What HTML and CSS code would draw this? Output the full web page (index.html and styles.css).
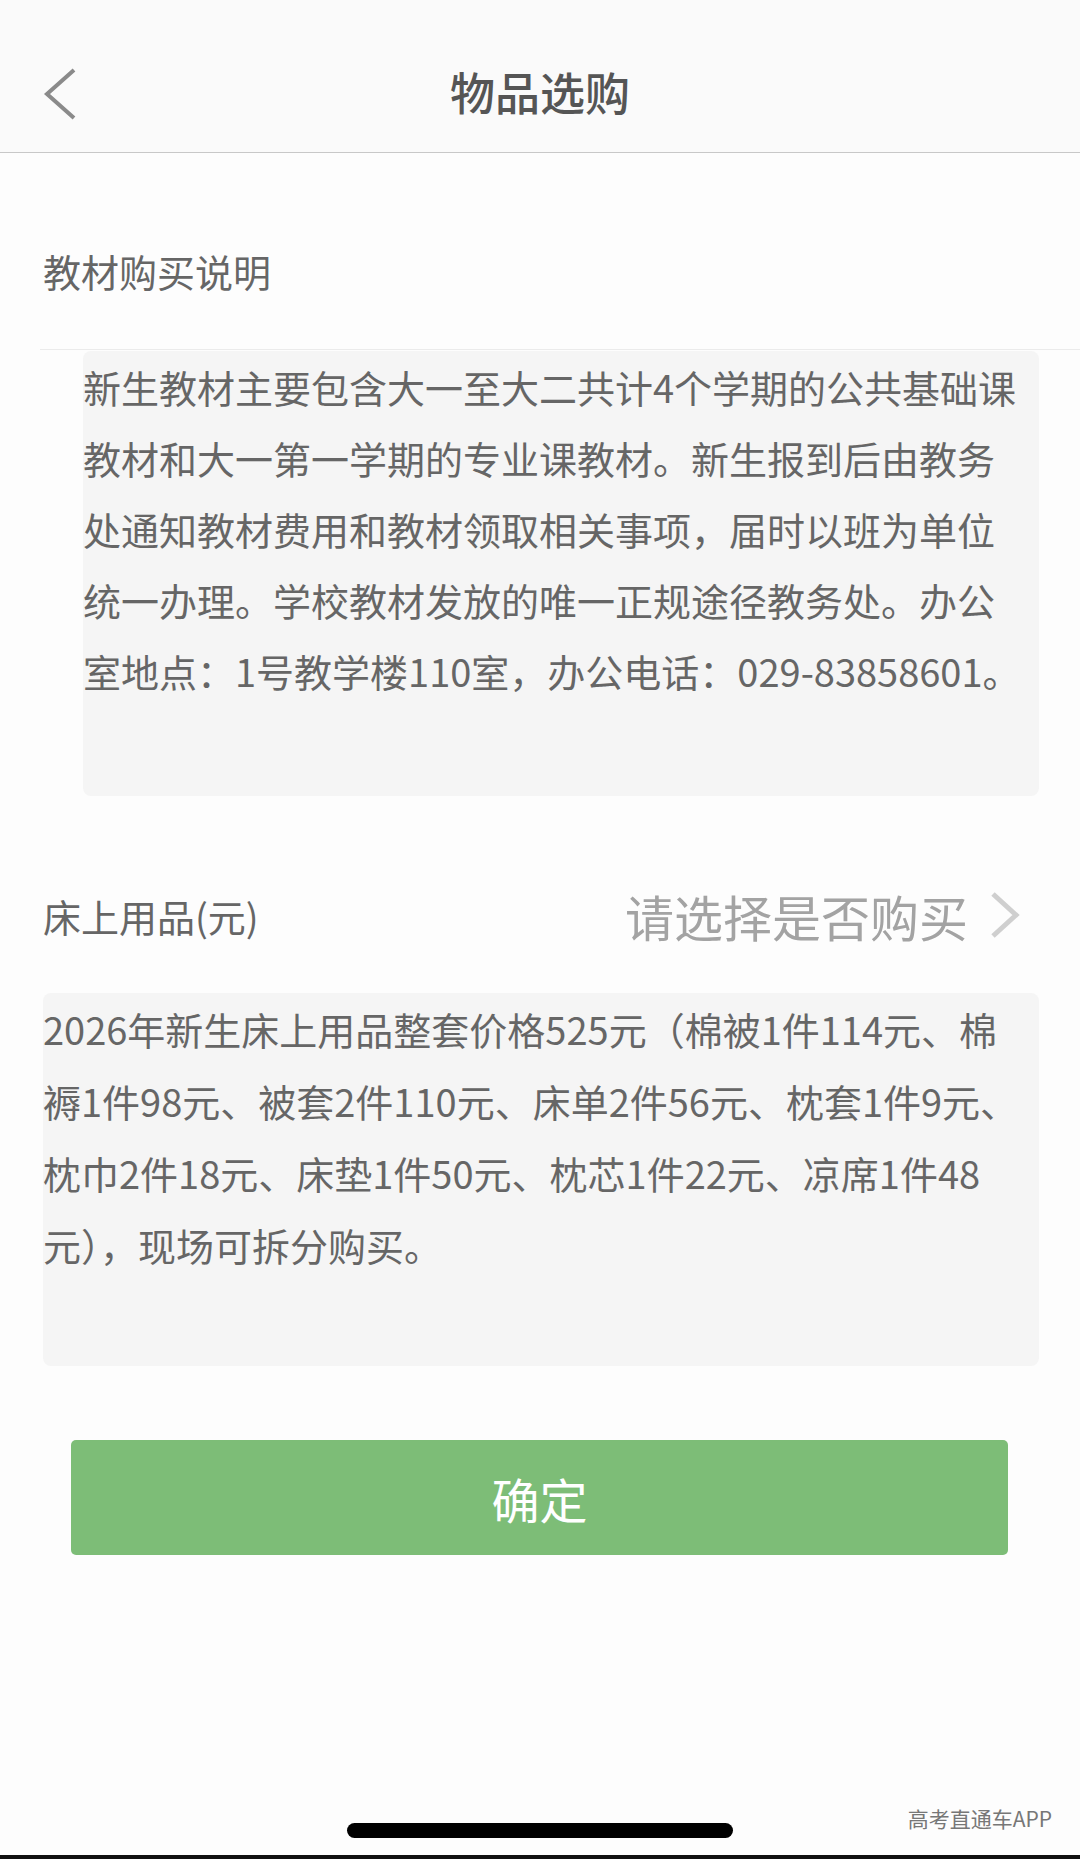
FILE: index.html
```html
<!DOCTYPE html>
<html lang="zh-CN">
<head>
  <meta charset="UTF-8" />
  <meta name="viewport" content="width=device-width, initial-scale=1.0"/>
  <title>物品选购</title>
  <link rel="stylesheet" href="styles.css">
</head>
<body>

<div class="page">
  <div class="header">
    <svg class="back" viewBox="0 0 34 52" width="34" height="52">
      <polyline points="31,2 4,26 31,50" fill="none" stroke="#8a8a8a" stroke-width="4" stroke-linejoin="miter"/>
    </svg>
    <div class="title">物品选购</div>
  </div>

  <div class="label">教材购买说明</div>
  <div class="divider"></div>
  <div class="note note-books">新生教材主要包含大一至大二共计4个学期的公共基础课<br>教材和大一第一学期的专业课教材。新生报到后由教务<br>处通知教材费用和教材领取相关事项，届时以班为单位<br>统一办理。学校教材发放的唯一正规途径教务处。办公<br>室地点：1号教学楼110室，办公电话：029-83858601。</div>

  <div class="row">
    <div class="label-inline">床上用品(元)</div>
    <div class="picker">
      <span>请选择是否购买</span>
      <svg viewBox="0 0 34 48" width="34" height="48">
        <polyline points="5,3 28,24 5,45" fill="none" stroke="#cfcfcf" stroke-width="5"/>
      </svg>
    </div>
  </div>
  <div class="note note-bed">2026年新生床上用品整套价格525元（棉被1件114元、棉<br>褥1件98元、被套2件110元、床单2件56元、枕套1件9元、<br>枕巾2件18元、床垫1件50元、枕芯1件22元、凉席1件48<br>元），现场可拆分购买。</div>

  <button class="confirm">确定</button>

  <div class="watermark">高考直通车APP</div>
  <div class="home-bar"></div>
  <div class="edge"></div>
</div>

</body>
</html>
```

FILE: styles.css
```css
body {
  margin: 0;
  background-color: #fdfdfd;
  font-family: "Noto Sans CJK SC", "Noto Sans", sans-serif;
  color: #666;
}

.page {
  position: relative;
  width: 1080px;
  height: 1859px;
  overflow: hidden;
}

.header {
  position: relative;
  height: 122px;
  padding-top: 30px;
  background-color: #fafafa;
  border-bottom: 1.5px solid #c8c8c8;
  display: flex;
  align-items: center;
  justify-content: center;
}

.back {
  position: absolute;
  left: 43px;
  top: 68px;
}

.title {
  font-size: 45px;
  font-weight: 500;
  color: #555;
  letter-spacing: 0;
}

.label {
  font-size: 38px;
  line-height: 60px;
  padding: 88px 0 48px 43px;
}

.divider {
  height: 1px;
  margin-left: 40px;
  background-color: #ebebeb;
}

.note {
  background-color: #f5f5f5;
  border-radius: 8px;
  font-size: 38px;
  color: #666;
  white-space: nowrap;
}

.note-books {
  margin: 1px 41px 0 83px;
  height: 445px;
  line-height: 71px;
}

.row {
  display: flex;
  align-items: center;
  justify-content: space-between;
  height: 60px;
  margin-top: 89px;
  padding: 0 58px 0 43px;
}

.label-inline {
  font-size: 38px;
}

.picker {
  display: flex;
  align-items: center;
  gap: 20px;
  font-size: 49px;
  color: #a3a3a3;
}

.note-bed {
  margin: 48px 41px 0 43px;
  height: 373px;
  line-height: 72px;
}

.confirm {
  display: block;
  margin: 74px 0 0 71px;
  width: 937px;
  height: 115px;
  border: none;
  border-radius: 5px;
  background-color: #7dbd77;
  color: #fff;
  font-family: inherit;
  font-size: 48px;
  cursor: pointer;
}

.watermark {
  position: absolute;
  right: 28px;
  top: 1803px;
  font-size: 21px;
  color: #777;
}

.home-bar {
  position: absolute;
  left: 347px;
  top: 1823px;
  width: 386px;
  height: 15px;
  border-radius: 8px;
  background-color: #000;
}

.edge {
  position: absolute;
  left: 0;
  right: 0;
  bottom: 0;
  height: 4px;
  background-color: #111;
}
```
